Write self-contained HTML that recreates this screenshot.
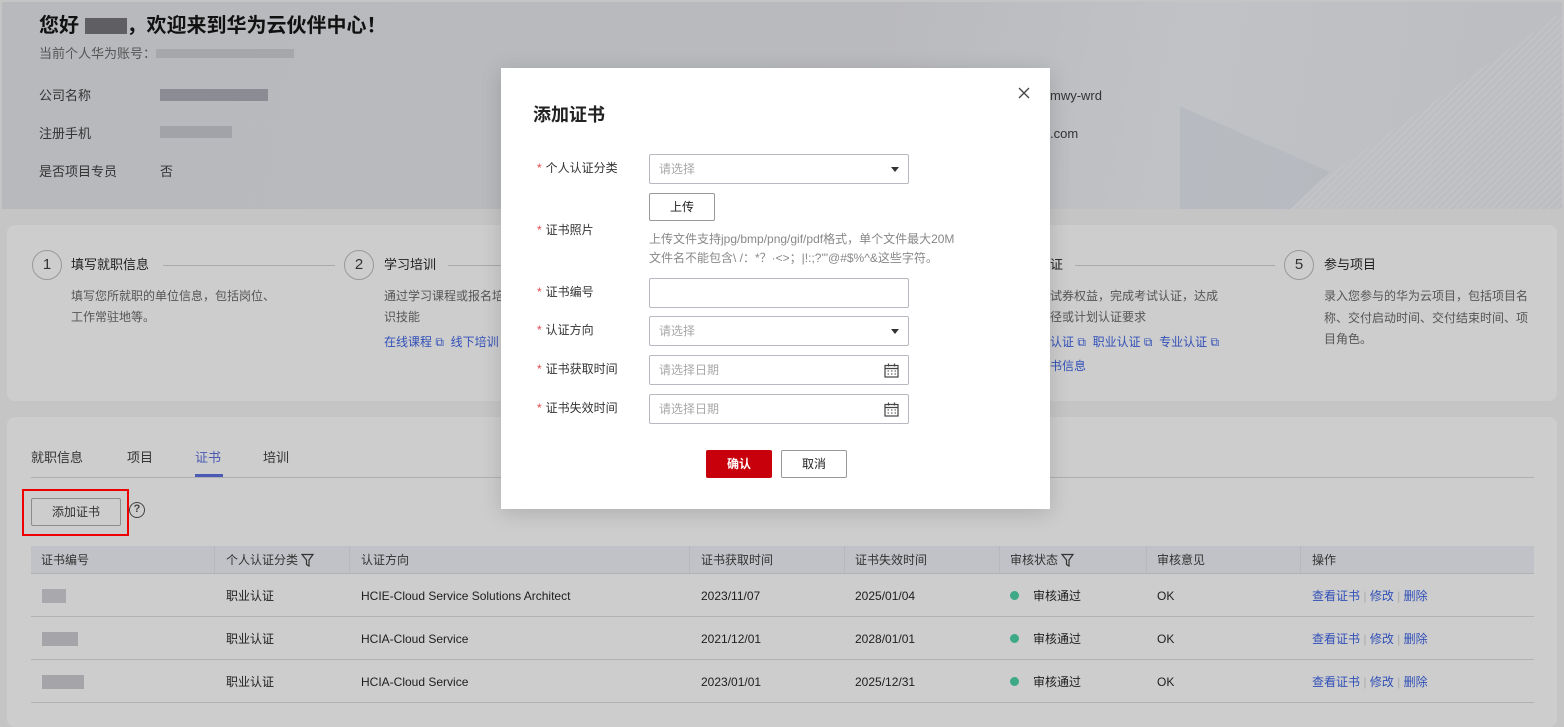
<!DOCTYPE html>
<html><head><meta charset="utf-8"><style>
*{margin:0;padding:0;box-sizing:border-box}
body{width:1564px;height:717px;overflow:hidden;background:#c5c5c5;font-family:"Liberation Sans","Noto Sans CJK SC",sans-serif;font-size:13px;color:#1e1e1e;position:relative}
.a{position:absolute;white-space:nowrap;line-height:16px}
.hdr{left:2px;top:2px;width:1560px;height:207px;background:linear-gradient(100deg,#b8b9bd 0%,#b9babe 55%,#c0c2c6 75%,#bcbdc1 100%)}
.card{background:#cdcdcd;border-radius:8px}
.circ{width:30px;height:30px;border:1px solid #999;border-radius:50%;text-align:center;line-height:28px;font-size:15px;color:#333}
.ln{height:1px;background:#a9a9a9}
.g{color:#555}
.lk{color:#3150b8}
.th{background:#c1c2c7;height:27px;top:546px;left:31px;width:1503px}
.sep{height:1px;background:#b3b3b3;left:31px;width:1503px}
.modal{left:501px;top:68px;width:549px;height:441px;background:#fff;box-shadow:0 4px 20px rgba(0,0,0,.15)}
.inp{position:absolute;left:148px;width:260px;height:30px;border:1px solid #b8b8c0;border-radius:2px;color:#a8a8a8;font-size:12px;padding-left:9px;line-height:28px}
.lab{position:absolute;left:36px;font-size:12px;color:#333;line-height:16px}
.lab b{color:#e5484d;font-weight:normal;margin-right:4px}
.tri{position:absolute;right:9px;top:12px;border-left:4px solid transparent;border-right:4px solid transparent;border-top:5px solid #333}
.cal{position:absolute;right:9px;top:7px}
.dot{display:inline-block;width:9px;height:9px;border-radius:50%;background:#3ea987;margin-right:14px;vertical-align:0}
</style></head><body>
<div class="a hdr"></div>
<svg class="a" style="left:1180px;top:2px" width="382" height="207"><defs><pattern id="p" width="5" height="5" patternUnits="userSpaceOnUse" patternTransform="rotate(-45)"><rect width="5" height="2" fill="#c6c8cc"/></pattern></defs><polygon points="100,207 382,10 382,207" fill="url(#p)" opacity=".5"/><polygon points="-70,150 -10,100 150,170 110,207 -20,207" fill="#aeb4ba" opacity=".45"/></svg>
<div class="a" style="left:39px;top:14px;font-size:20px;line-height:24px;font-weight:bold;color:#111">您好 <span style="display:inline-block;width:42px;height:16px;background:#5e5e63;vertical-align:-2px"></span>，欢迎来到华为云伙伴中心！</div>
<div class="a g" style="left:39px;top:46px">当前个人华为账号：<span style="display:inline-block;width:138px;height:9px;background:#a6a7ab"></span></div>
<div class="a" style="left:39px;top:88px;color:#333">公司名称</div>
<div class="a" style="left:160px;top:89px;width:108px;height:12px;background:#8b8c93"></div>
<div class="a" style="left:39px;top:126px;color:#333">注册手机</div>
<div class="a" style="left:160px;top:126px;width:72px;height:12px;background:#a2a3a8"></div>
<div class="a" style="left:39px;top:164px;color:#333">是否项目专员</div>
<div class="a" style="left:160px;top:164px;color:#333">否</div>
<div class="a" style="left:1050px;top:88px;color:#333">mwy-wrd</div>
<div class="a" style="left:1050px;top:126px;color:#333">.com</div>

<div class="a card" style="left:7px;top:225px;width:1550px;height:176px"></div>
<div class="a circ" style="left:32px;top:250px;line-height:28px">1</div>
<div class="a" style="left:71px;top:257px;font-size:13px">填写就职信息</div>
<div class="a ln" style="left:163px;top:265px;width:172px"></div>
<div class="a g" style="left:71px;top:286px;font-size:12px;line-height:21px">填写您所就职的单位信息，包括岗位、<br>工作常驻地等。</div>
<div class="a circ" style="left:344px;top:250px;line-height:28px">2</div>
<div class="a" style="left:384px;top:257px">学习培训</div>
<div class="a ln" style="left:448px;top:265px;width:60px"></div>
<div class="a g" style="left:384px;top:286px;font-size:12px;line-height:21px">通过学习课程或报名培<br>识技能</div>
<div class="a lk" style="left:384px;top:334px;font-size:12px">在线课程 ⧉ &nbsp;线下培训</div>
<div class="a" style="left:1050px;top:257px">证</div>
<div class="a ln" style="left:1075px;top:265px;width:200px"></div>
<div class="a g" style="left:1050px;top:286px;font-size:12px;line-height:21px">试券权益，完成考试认证，达成<br>径或计划认证要求</div>
<div class="a lk" style="left:1050px;top:334px;font-size:12px">认证 ⧉ &nbsp;职业认证 ⧉ &nbsp;专业认证 ⧉</div>
<div class="a lk" style="left:1050px;top:358px;font-size:12px">书信息</div>
<div class="a circ" style="left:1284px;top:250px;line-height:28px">5</div>
<div class="a" style="left:1324px;top:257px">参与项目</div>
<div class="a g" style="left:1324px;top:286px;font-size:12px;line-height:21.5px">录入您参与的华为云项目，包括项目名<br>称、交付启动时间、交付结束时间、项<br>目角色。</div>

<div class="a card" style="left:7px;top:417px;width:1550px;height:310px"></div>
<div class="a" style="left:31px;top:450px;color:#333">就职信息</div>
<div class="a" style="left:127px;top:450px;color:#333">项目</div>
<div class="a" style="left:195px;top:450px;color:#4b5bb5">证书</div>
<div class="a" style="left:263px;top:450px;color:#333">培训</div>
<div class="a" style="left:31px;top:477px;width:1503px;height:1px;background:#b0b0b0"></div>
<div class="a" style="left:195px;top:474px;width:28px;height:3px;background:#4b5bb5"></div>
<div class="a" style="left:22px;top:489px;width:107px;height:47px;border:2px solid #e00"></div>
<div class="a" style="left:31px;top:498px;width:90px;height:28px;border:1px solid #8c8c8c;border-radius:2px;text-align:center;line-height:26px;font-size:12px;color:#333">添加证书</div>
<div class="a" style="left:129px;top:502px;width:16px;height:16px;border:1.5px solid #444;border-radius:50%;text-align:center;line-height:13px;font-size:11px;font-weight:bold;color:#444">?</div>

<div class="a th"></div>
<div class="a" style="left:214px;top:546px;width:1px;height:27px;background:#b7b8bd"></div>
<div class="a" style="left:349px;top:546px;width:1px;height:27px;background:#b7b8bd"></div>
<div class="a" style="left:689px;top:546px;width:1px;height:27px;background:#b7b8bd"></div>
<div class="a" style="left:844px;top:546px;width:1px;height:27px;background:#b7b8bd"></div>
<div class="a" style="left:999px;top:546px;width:1px;height:27px;background:#b7b8bd"></div>
<div class="a" style="left:1146px;top:546px;width:1px;height:27px;background:#b7b8bd"></div>
<div class="a" style="left:1300px;top:546px;width:1px;height:27px;background:#b7b8bd"></div>
<div class="a" style="top:552px;left:41px;font-size:12px;color:#333">证书编号</div>
<div class="a" style="top:552px;left:226px;font-size:12px;color:#333">个人认证分类 <svg width="13" height="14" style="vertical-align:-3px"><path d="M1 1.5H12L8 7V13L5.5 11.5V7Z" fill="none" stroke="#333" stroke-width="1.2"/></svg></div>
<div class="a" style="top:552px;left:361px;font-size:12px;color:#333">认证方向</div>
<div class="a" style="top:552px;left:701px;font-size:12px;color:#333">证书获取时间</div>
<div class="a" style="top:552px;left:855px;font-size:12px;color:#333">证书失效时间</div>
<div class="a" style="top:552px;left:1010px;font-size:12px;color:#333">审核状态 <svg width="13" height="14" style="vertical-align:-3px"><path d="M1 1.5H12L8 7V13L5.5 11.5V7Z" fill="none" stroke="#333" stroke-width="1.2"/></svg></div>
<div class="a" style="top:552px;left:1157px;font-size:12px;color:#333">审核意见</div>
<div class="a" style="top:552px;left:1312px;font-size:12px;color:#333">操作</div>
<div class="a sep" style="top:573px"></div>
<div class="a sep" style="top:616px"></div>
<div class="a sep" style="top:659px"></div>
<div class="a sep" style="top:702px"></div>

<div class="a" style="top:589px;left:42px;width:24px;height:14px;background:#a9a9ad"></div>
<div class="a" style="top:632px;left:42px;width:36px;height:14px;background:#a5a5a9"></div>
<div class="a" style="top:675px;left:42px;width:42px;height:14px;background:#a5a5a9"></div>
<div class="a" style="top:588px;left:226px;font-size:12px">职业认证</div>
<div class="a" style="top:631px;left:226px;font-size:12px">职业认证</div>
<div class="a" style="top:674px;left:226px;font-size:12px">职业认证</div>
<div class="a" style="top:588px;left:361px;font-size:12px">HCIE-Cloud Service Solutions Architect</div>
<div class="a" style="top:631px;left:361px;font-size:12px">HCIA-Cloud Service</div>
<div class="a" style="top:674px;left:361px;font-size:12px">HCIA-Cloud Service</div>
<div class="a" style="top:588px;left:701px;font-size:12px">2023/11/07</div>
<div class="a" style="top:631px;left:701px;font-size:12px">2021/12/01</div>
<div class="a" style="top:674px;left:701px;font-size:12px">2023/01/01</div>
<div class="a" style="top:588px;left:855px;font-size:12px">2025/01/04</div>
<div class="a" style="top:631px;left:855px;font-size:12px">2028/01/01</div>
<div class="a" style="top:674px;left:855px;font-size:12px">2025/12/31</div>
<div class="a" style="top:588px;left:1010px;font-size:12px"><span class="dot"></span>审核通过</div>
<div class="a" style="top:631px;left:1010px;font-size:12px"><span class="dot"></span>审核通过</div>
<div class="a" style="top:674px;left:1010px;font-size:12px"><span class="dot"></span>审核通过</div>
<div class="a" style="top:588px;left:1157px;font-size:12px">OK</div>
<div class="a" style="top:631px;left:1157px;font-size:12px">OK</div>
<div class="a" style="top:674px;left:1157px;font-size:12px">OK</div>
<div class="a lk" style="top:588px;left:1312px;font-size:12px">查看证书<span style="color:#aaa"> | </span>修改<span style="color:#aaa"> | </span>删除</div>
<div class="a lk" style="top:631px;left:1312px;font-size:12px">查看证书<span style="color:#aaa"> | </span>修改<span style="color:#aaa"> | </span>删除</div>
<div class="a lk" style="top:674px;left:1312px;font-size:12px">查看证书<span style="color:#aaa"> | </span>修改<span style="color:#aaa"> | </span>删除</div>

<div class="a modal">
 <svg style="position:absolute;left:517px;top:19px" width="12" height="12"><path d="M1 1L11 11M11 1L1 11" stroke="#444" stroke-width="1.3"/></svg>
 <div class="a" style="left:32px;top:36px;font-size:18px;line-height:22px;font-weight:bold;color:#222">添加证书</div>
 <div class="lab" style="top:92px"><b>*</b>个人认证分类</div>
 <div class="inp" style="top:86px">请选择<span class="tri"></span></div>
 <div style="position:absolute;left:148px;top:125px;width:66px;height:28px;border:1px solid #999;border-radius:2px;text-align:center;line-height:26px;font-size:12px;color:#222">上传</div>
 <div class="lab" style="top:154px"><b>*</b>证书照片</div>
 <div style="position:absolute;left:148px;top:162px;font-size:12px;color:#888;line-height:19px;white-space:nowrap">上传文件支持jpg/bmp/png/gif/pdf格式，单个文件最大20M<br>文件名不能包含\ /：*？·&lt;&gt;；|!:;?'"@#$%^&amp;这些字符。</div>
 <div class="lab" style="top:216px"><b>*</b>证书编号</div>
 <div class="inp" style="top:210px"></div>
 <div class="lab" style="top:254px"><b>*</b>认证方向</div>
 <div class="inp" style="top:248px">请选择<span class="tri"></span></div>
 <div class="lab" style="top:293px"><b>*</b>证书获取时间</div>
 <div class="inp" style="top:287px">请选择日期<svg class="cal" width="15" height="15"><rect x="1" y="2.5" width="13" height="11.5" fill="none" stroke="#444" stroke-width="1.2"/><path d="M1 5.5H14M4.5 0.5V3.5M10.5 0.5V3.5" stroke="#444" stroke-width="1.2"/><path d="M3.5 8H5M7 8H8.5M10.5 8H12M3.5 11H5M7 11H8.5M10.5 11H12" stroke="#444"/></svg></div>
 <div class="lab" style="top:332px"><b>*</b>证书失效时间</div>
 <div class="inp" style="top:326px">请选择日期<svg class="cal" width="15" height="15"><rect x="1" y="2.5" width="13" height="11.5" fill="none" stroke="#444" stroke-width="1.2"/><path d="M1 5.5H14M4.5 0.5V3.5M10.5 0.5V3.5" stroke="#444" stroke-width="1.2"/><path d="M3.5 8H5M7 8H8.5M10.5 8H12M3.5 11H5M7 11H8.5M10.5 11H12" stroke="#444"/></svg></div>
 <div style="position:absolute;left:205px;top:382px;width:66px;height:28px;background:#c7000b;border-radius:2px;color:#fff;font-weight:bold;font-size:12px;text-align:center;line-height:28px">确认</div>
 <div style="position:absolute;left:280px;top:382px;width:66px;height:28px;border:1px solid #999;border-radius:2px;color:#222;font-size:12px;text-align:center;line-height:26px">取消</div>
</div>
</body></html>
